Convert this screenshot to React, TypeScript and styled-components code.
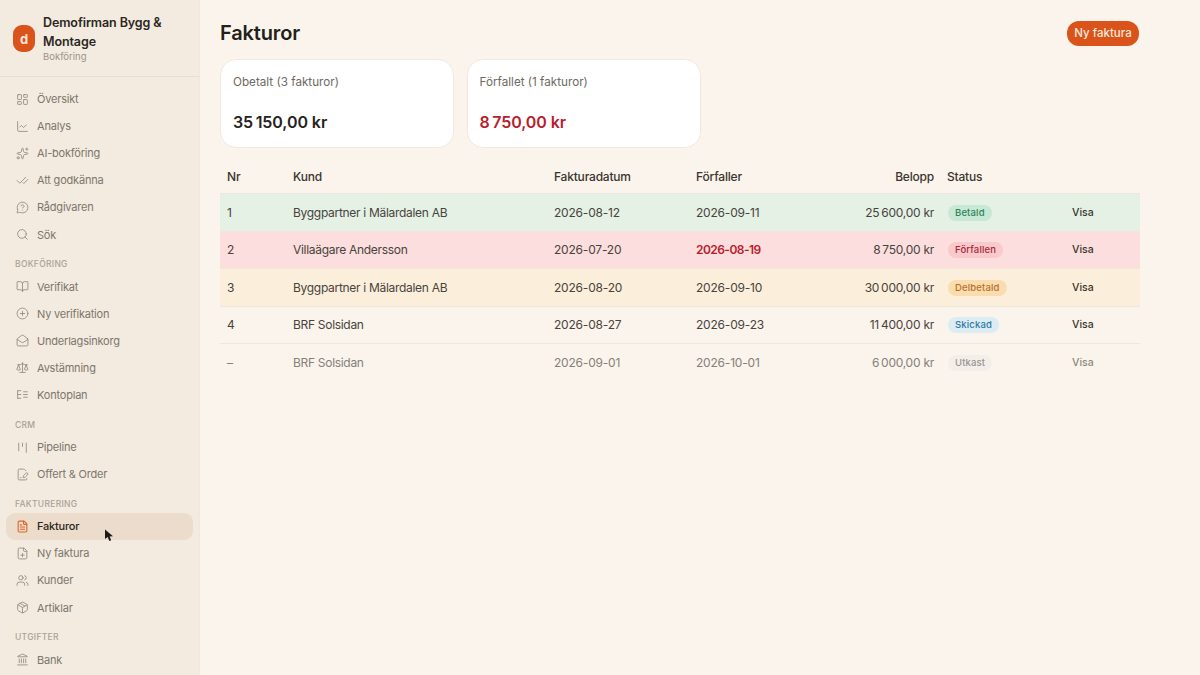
import React from 'react';
import styled, { createGlobalStyle } from 'styled-components';
import {
  LayoutDashboard,
  ChartLine,
  Sparkles,
  CheckCheck,
  MessageCircleQuestionMark,
  Search,
  BookOpen,
  CirclePlus,
  MailOpen,
  Scale,
  FileSignature,
  FileText,
  FilePlus,
  Users,
  Package,
  Landmark,
} from 'lucide-react';

const GlobalStyle = createGlobalStyle`
  html, body {
    margin: 0;
    padding: 0;
    height: 100%;
    overflow: hidden;
    background: #fbf4ec;
  }
  * {
    box-sizing: border-box;
  }
`;

const Page = styled.div`
  display: flex;
  width: 1200px;
  height: 675px;
  overflow: hidden;
  font-family: Inter, "Noto Sans", sans-serif;
  color: #26221e;
  background: #fbf4ec;
`;

const Sidebar = styled.aside`
  position: relative;
  flex: 0 0 200px;
  height: 675px;
  overflow: hidden;
  background: #f3ebdf;
  border-right: 1px solid #f0e8dd;
`;

const Brand = styled.div`
  display: flex;
  align-items: center;
  gap: 8px;
  height: 77px;
  padding: 0 12px 0 13px;
  border-bottom: 1px solid #e8dfd3;
`;

const BrandMark = styled.div`
  flex: 0 0 22px;
  display: flex;
  align-items: center;
  justify-content: center;
  width: 22px;
  height: 27px;
  margin-top: 1px;
  border-radius: 9px;
  background: #d9531a;
  color: #f8e6d6;
  font-size: 13px;
  font-weight: 700;
`;

const BrandText = styled.div`
  display: flex;
  flex-direction: column;
`;

const BrandName = styled.div`
  font-size: 12.5px;
  line-height: 19px;
  font-weight: 600;
  letter-spacing: -0.1px;
  color: #2b2622;
`;

const BrandSub = styled.div`
  font-size: 9.5px;
  line-height: 12px;
  color: #9a938a;
`;

const Nav = styled.nav`
  display: flex;
  flex-direction: column;
  padding: 8.5px 6px 0;
`;

const SectionLabel = styled.div`
  height: 17px;
  margin-top: 8px;
  padding: 2px 0 0 9px;
  font-size: 8.5px;
  line-height: 12px;
  font-weight: 500;
  letter-spacing: 0.3px;
  color: #a9a297;
`;

const NavItem = styled.div<{ $active?: boolean }>`
  flex: 0 0 27.1px;
  display: flex;
  align-items: center;
  gap: 8px;
  height: 27.1px;
  padding-left: 10px;
  border-radius: 9px;
  font-size: 11px;
  letter-spacing: -0.2px;
  font-weight: ${(props) => (props.$active ? 500 : 400)};
  color: ${(props) => (props.$active ? '#2b2622' : '#7d766c')};
  background: ${(props) => (props.$active ? '#ebdccb' : 'transparent')};

  svg {
    flex: 0 0 13px;
    width: 13px;
    height: 13px;
    stroke-width: ${(props) => (props.$active ? 2 : 1.6)};
    color: ${(props) => (props.$active ? '#e0642a' : '#928b81')};
  }
`;

const Cursor = styled.svg`
  position: absolute;
  left: 104px;
  top: 529px;
  width: 11px;
  height: 13px;
`;

const Main = styled.main`
  flex: 1;
  padding: 21px 60px 0 20px;
`;

const TopBar = styled.div`
  display: flex;
  align-items: center;
  justify-content: space-between;
  height: 24px;
  margin-bottom: 14px;
`;

const Title = styled.h1`
  margin: 0;
  font-size: 20px;
  font-weight: 600;
  letter-spacing: -0.15px;
  color: #231f1b;
`;

const PrimaryButton = styled.button`
  height: 25px;
  width: 72px;
  margin-right: 1px;
  padding: 0;
  border: none;
  border-radius: 12px;
  background: #d9531a;
  color: #fbeadb;
  font-family: inherit;
  font-size: 11.5px;
  font-weight: 500;
`;

const Cards = styled.div`
  display: flex;
  gap: 12.5px;
  margin-bottom: 12px;
`;

const Card = styled.div`
  display: flex;
  flex-direction: column;
  justify-content: space-between;
  width: 234px;
  height: 89px;
  padding: 15px 12px 15px;
  border: 1px solid #f1e9df;
  border-radius: 16px;
  background: #ffffff;
`;

const CardLabel = styled.div`
  font-size: 11.7px;
  line-height: 14px;
  font-weight: 400;
  color: #6f6963;
`;

const CardValue = styled.div<{ $danger?: boolean }>`
  font-size: 16px;
  line-height: 20px;
  font-weight: 600;
  letter-spacing: -0.08px;
  color: ${(props) => (props.$danger ? '#b91c2c' : '#26221e')};
`;

const Table = styled.table`
  width: 920px;
  table-layout: fixed;
  border-collapse: collapse;
`;

const HeadCell = styled.th<{ $right?: boolean; $width: number }>`
  width: ${(props) => props.$width}px;
  height: 33.5px;
  padding: 0 ${(props) => (props.$right ? 6 : 7)}px 0 7px;
  font-size: 12px;
  font-weight: 500;
  letter-spacing: -0.2px;
  text-align: ${(props) => (props.$right ? 'right' : 'left')};
  color: #3a352f;
  border-bottom: 1px solid #efe7dc;
`;

const rowColors: Record<string, string> = {
  betald: '#e5f1e5',
  forfallen: '#fbdedd',
  delbetald: '#fbefdc',
  skickad: 'transparent',
  utkast: 'transparent',
};

const Row = styled.tr<{ $status: string }>`
  height: 37.5px;
  background: ${(props) => rowColors[props.$status]};
  color: ${(props) => (props.$status === 'utkast' ? '#85807a' : '#48433d')};
  border-bottom: 1px solid ${(props) => (props.$status === 'utkast' ? 'transparent' : '#efe7dc')};
`;

const Cell = styled.td`
  padding: 0 7px;
  font-size: 12px;
  white-space: nowrap;
`;

const CustomerCell = styled(Cell)`
  letter-spacing: -0.3px;
`;

const DateCell = styled(Cell)`
  letter-spacing: -0.2px;
`;

const AmountCell = styled(Cell)`
  padding-right: 6px;
  text-align: right;
  letter-spacing: -0.25px;
`;

const OverdueDate = styled.span`
  font-weight: 600;
  letter-spacing: -0.55px;
  color: #b91c2c;
`;

const badgeColors: Record<string, { bg: string; fg: string }> = {
  betald: { bg: '#c6e8d5', fg: '#2f8259' },
  forfallen: { bg: '#f9c9cc', fg: '#a8283a' },
  delbetald: { bg: '#fbdcae', fg: '#b4702a' },
  skickad: { bg: '#dcecf3', fg: '#2f7aa3' },
  utkast: { bg: '#f4eeea', fg: '#98928c' },
};

const Badge = styled.span<{ $status: string }>`
  display: inline-block;
  margin-left: 1px;
  padding: 0 7px;
  height: 16px;
  line-height: 16px;
  border-radius: 8px;
  font-size: 9.5px;
  font-weight: 500;
  letter-spacing: 0.15px;
  background: ${(props) => badgeColors[props.$status].bg};
  color: ${(props) => badgeColors[props.$status].fg};
`;

const ViewLink = styled.span<{ $muted?: boolean }>`
  position: relative;
  top: -1px;
  font-size: 10.5px;
  font-weight: 500;
  color: ${(props) => (props.$muted ? '#8d8881' : '#3a352f')};
`;

function PipelineIcon() {
  return (
    <svg viewBox="0 0 24 24" fill="none" stroke="currentColor" strokeLinecap="round">
      <path d="M5 4v14M12 4v6M19 4v17" />
    </svg>
  );
}

function ChartOfAccountsIcon() {
  return (
    <svg viewBox="0 0 24 24" fill="none" stroke="currentColor" strokeLinecap="round">
      <path d="M3 5v14M3 5h6M3 12h6M3 19h6M14 7h7M14 12h7M14 17h7" />
    </svg>
  );
}

const navGroups = [
  {
    items: [
      { label: 'Översikt', icon: LayoutDashboard },
      { label: 'Analys', icon: ChartLine },
      { label: 'AI-bokföring', icon: Sparkles },
      { label: 'Att godkänna', icon: CheckCheck },
      { label: 'Rådgivaren', icon: MessageCircleQuestionMark },
      { label: 'Sök', icon: Search },
    ],
  },
  {
    title: 'BOKFÖRING',
    items: [
      { label: 'Verifikat', icon: BookOpen },
      { label: 'Ny verifikation', icon: CirclePlus },
      { label: 'Underlagsinkorg', icon: MailOpen },
      { label: 'Avstämning', icon: Scale },
      { label: 'Kontoplan', icon: ChartOfAccountsIcon },
    ],
  },
  {
    title: 'CRM',
    items: [
      { label: 'Pipeline', icon: PipelineIcon },
      { label: 'Offert & Order', icon: FileSignature },
    ],
  },
  {
    title: 'FAKTURERING',
    items: [
      { label: 'Fakturor', icon: FileText, active: true },
      { label: 'Ny faktura', icon: FilePlus },
      { label: 'Kunder', icon: Users },
      { label: 'Artiklar', icon: Package },
    ],
  },
  {
    title: 'UTGIFTER',
    items: [{ label: 'Bank', icon: Landmark }],
  },
];

const invoices = [
  { nr: '1', customer: 'Byggpartner i Mälardalen AB', date: '2026-08-12', due: '2026-09-11', amount: '25\u202f600,00 kr', status: 'betald', label: 'Betald' },
  { nr: '2', customer: 'Villaägare Andersson', date: '2026-07-20', due: '2026-08-19', amount: '8\u202f750,00 kr', status: 'forfallen', label: 'Förfallen' },
  { nr: '3', customer: 'Byggpartner i Mälardalen AB', date: '2026-08-20', due: '2026-09-10', amount: '30\u202f000,00 kr', status: 'delbetald', label: 'Delbetald' },
  { nr: '4', customer: 'BRF Solsidan', date: '2026-08-27', due: '2026-09-23', amount: '11\u202f400,00 kr', status: 'skickad', label: 'Skickad' },
  { nr: '–', customer: 'BRF Solsidan', date: '2026-09-01', due: '2026-10-01', amount: '6\u202f000,00 kr', status: 'utkast', label: 'Utkast' },
];

const App: React.FC = () => (
  <Page>
    <GlobalStyle />
    <Sidebar>
      <Brand>
        <BrandMark>d</BrandMark>
        <BrandText>
          <BrandName>Demofirman Bygg &amp; Montage</BrandName>
          <BrandSub>Bokföring</BrandSub>
        </BrandText>
      </Brand>
      <Nav>
        {navGroups.map((group, index) => (
          <React.Fragment key={index}>
            {group.title && <SectionLabel>{group.title}</SectionLabel>}
            {group.items.map((item) => (
              <NavItem key={item.label} $active={'active' in item && item.active}>
                <item.icon />
                {item.label}
              </NavItem>
            ))}
          </React.Fragment>
        ))}
      </Nav>
      <Cursor viewBox="0 0 11 13">
        <path d="M1 0.5 L1 10 L3.6 8 L5.4 12 L7.2 11.2 L5.6 7.4 L9 7.2 Z" fill="#1d1a18" />
      </Cursor>
    </Sidebar>
    <Main>
      <TopBar>
        <Title>Fakturor</Title>
        <PrimaryButton>Ny faktura</PrimaryButton>
      </TopBar>
      <Cards>
        <Card>
          <CardLabel>Obetalt (3 fakturor)</CardLabel>
          <CardValue>35{'\u202f'}150,00 kr</CardValue>
        </Card>
        <Card>
          <CardLabel>Förfallet (1 fakturor)</CardLabel>
          <CardValue $danger>8{'\u202f'}750,00 kr</CardValue>
        </Card>
      </Cards>
      <Table>
        <thead>
          <tr>
            <HeadCell $width={66}>Nr</HeadCell>
            <HeadCell $width={261}>Kund</HeadCell>
            <HeadCell $width={142}>Fakturadatum</HeadCell>
            <HeadCell $width={126}>Förfaller</HeadCell>
            <HeadCell $width={125} $right>Belopp</HeadCell>
            <HeadCell $width={125}>Status</HeadCell>
            <HeadCell $width={75} />
          </tr>
        </thead>
        <tbody>
          {invoices.map((invoice) => (
            <Row key={invoice.customer + invoice.date} $status={invoice.status}>
              <Cell>{invoice.nr}</Cell>
              <CustomerCell>{invoice.customer}</CustomerCell>
              <DateCell>{invoice.date}</DateCell>
              <DateCell>
                {invoice.status === 'forfallen' ? <OverdueDate>{invoice.due}</OverdueDate> : invoice.due}
              </DateCell>
              <AmountCell>{invoice.amount}</AmountCell>
              <Cell>
                <Badge $status={invoice.status}>{invoice.label}</Badge>
              </Cell>
              <Cell>
                <ViewLink $muted={invoice.status === 'utkast'}>Visa</ViewLink>
              </Cell>
            </Row>
          ))}
        </tbody>
      </Table>
    </Main>
  </Page>
);

export default App;
